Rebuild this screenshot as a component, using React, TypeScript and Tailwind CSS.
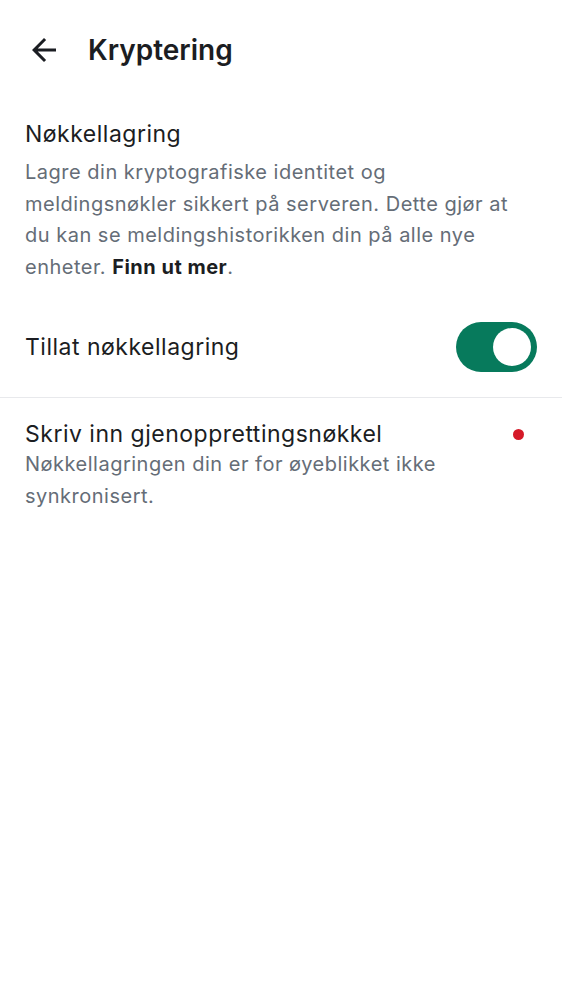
import React from "react";

export default function App() {
  return (
    <div className="w-[562px] h-[1000px] bg-white font-['Inter',sans-serif] text-[#1b1d22]">
      <div className="flex items-center h-[100px] pl-[26px]">
        <svg width="36" height="36" viewBox="0 0 24 24" fill="#1b1d22">
          <path d="M20 11H7.83l5.59-5.59L12 4l-8 8 8 8 1.41-1.41L7.83 13H20v-2z" />
        </svg>
        <div className="ml-[26px] text-[28px] font-semibold">Kryptering</div>
      </div>
      <div className="pl-[25px] pr-[30px] pt-[19px]">
        <div className="text-[23px] leading-[30px] tracking-[0.5px]">Nøkkellagring</div>
        <div className="mt-[8px] text-[20px] leading-[31.5px] tracking-[0.5px] text-[#656d77]">
          Lagre din kryptografiske identitet og meldingsnøkler sikkert på serveren. Dette gjør at du kan se meldingshistorikken din på alle nye enheter.{" "}
          <span className="font-bold text-[#1b1d22]">Finn ut mer</span>.
        </div>
      </div>
      <div className="mt-[14px] flex items-center justify-between px-[25px] h-[101px] border-b border-[#e8e9ec]">
        <div className="text-[23px] tracking-[0.5px]">Tillat nøkkellagring</div>
        <div className="w-[81px] h-[50px] rounded-full bg-[#077a5c] flex items-center justify-end pr-[6px]">
          <div className="w-[38px] h-[38px] rounded-full bg-white" />
        </div>
      </div>
      <div className="flex pl-[25px] pr-[38px] pt-[21px]">
        <div className="flex-1">
          <div className="text-[23px] leading-[30px] tracking-[0.5px]">Skriv inn gjenopprettingsnøkkel</div>
          <div className="text-[20px] leading-[31.5px] tracking-[0.5px] text-[#656d77] pr-[40px]">
            Nøkkellagringen din er for øyeblikket ikke synkronisert.
          </div>
        </div>
        <div className="w-[11px] h-[11px] rounded-full bg-[#d51928] mt-[10px]" />
      </div>
    </div>
  );
}
